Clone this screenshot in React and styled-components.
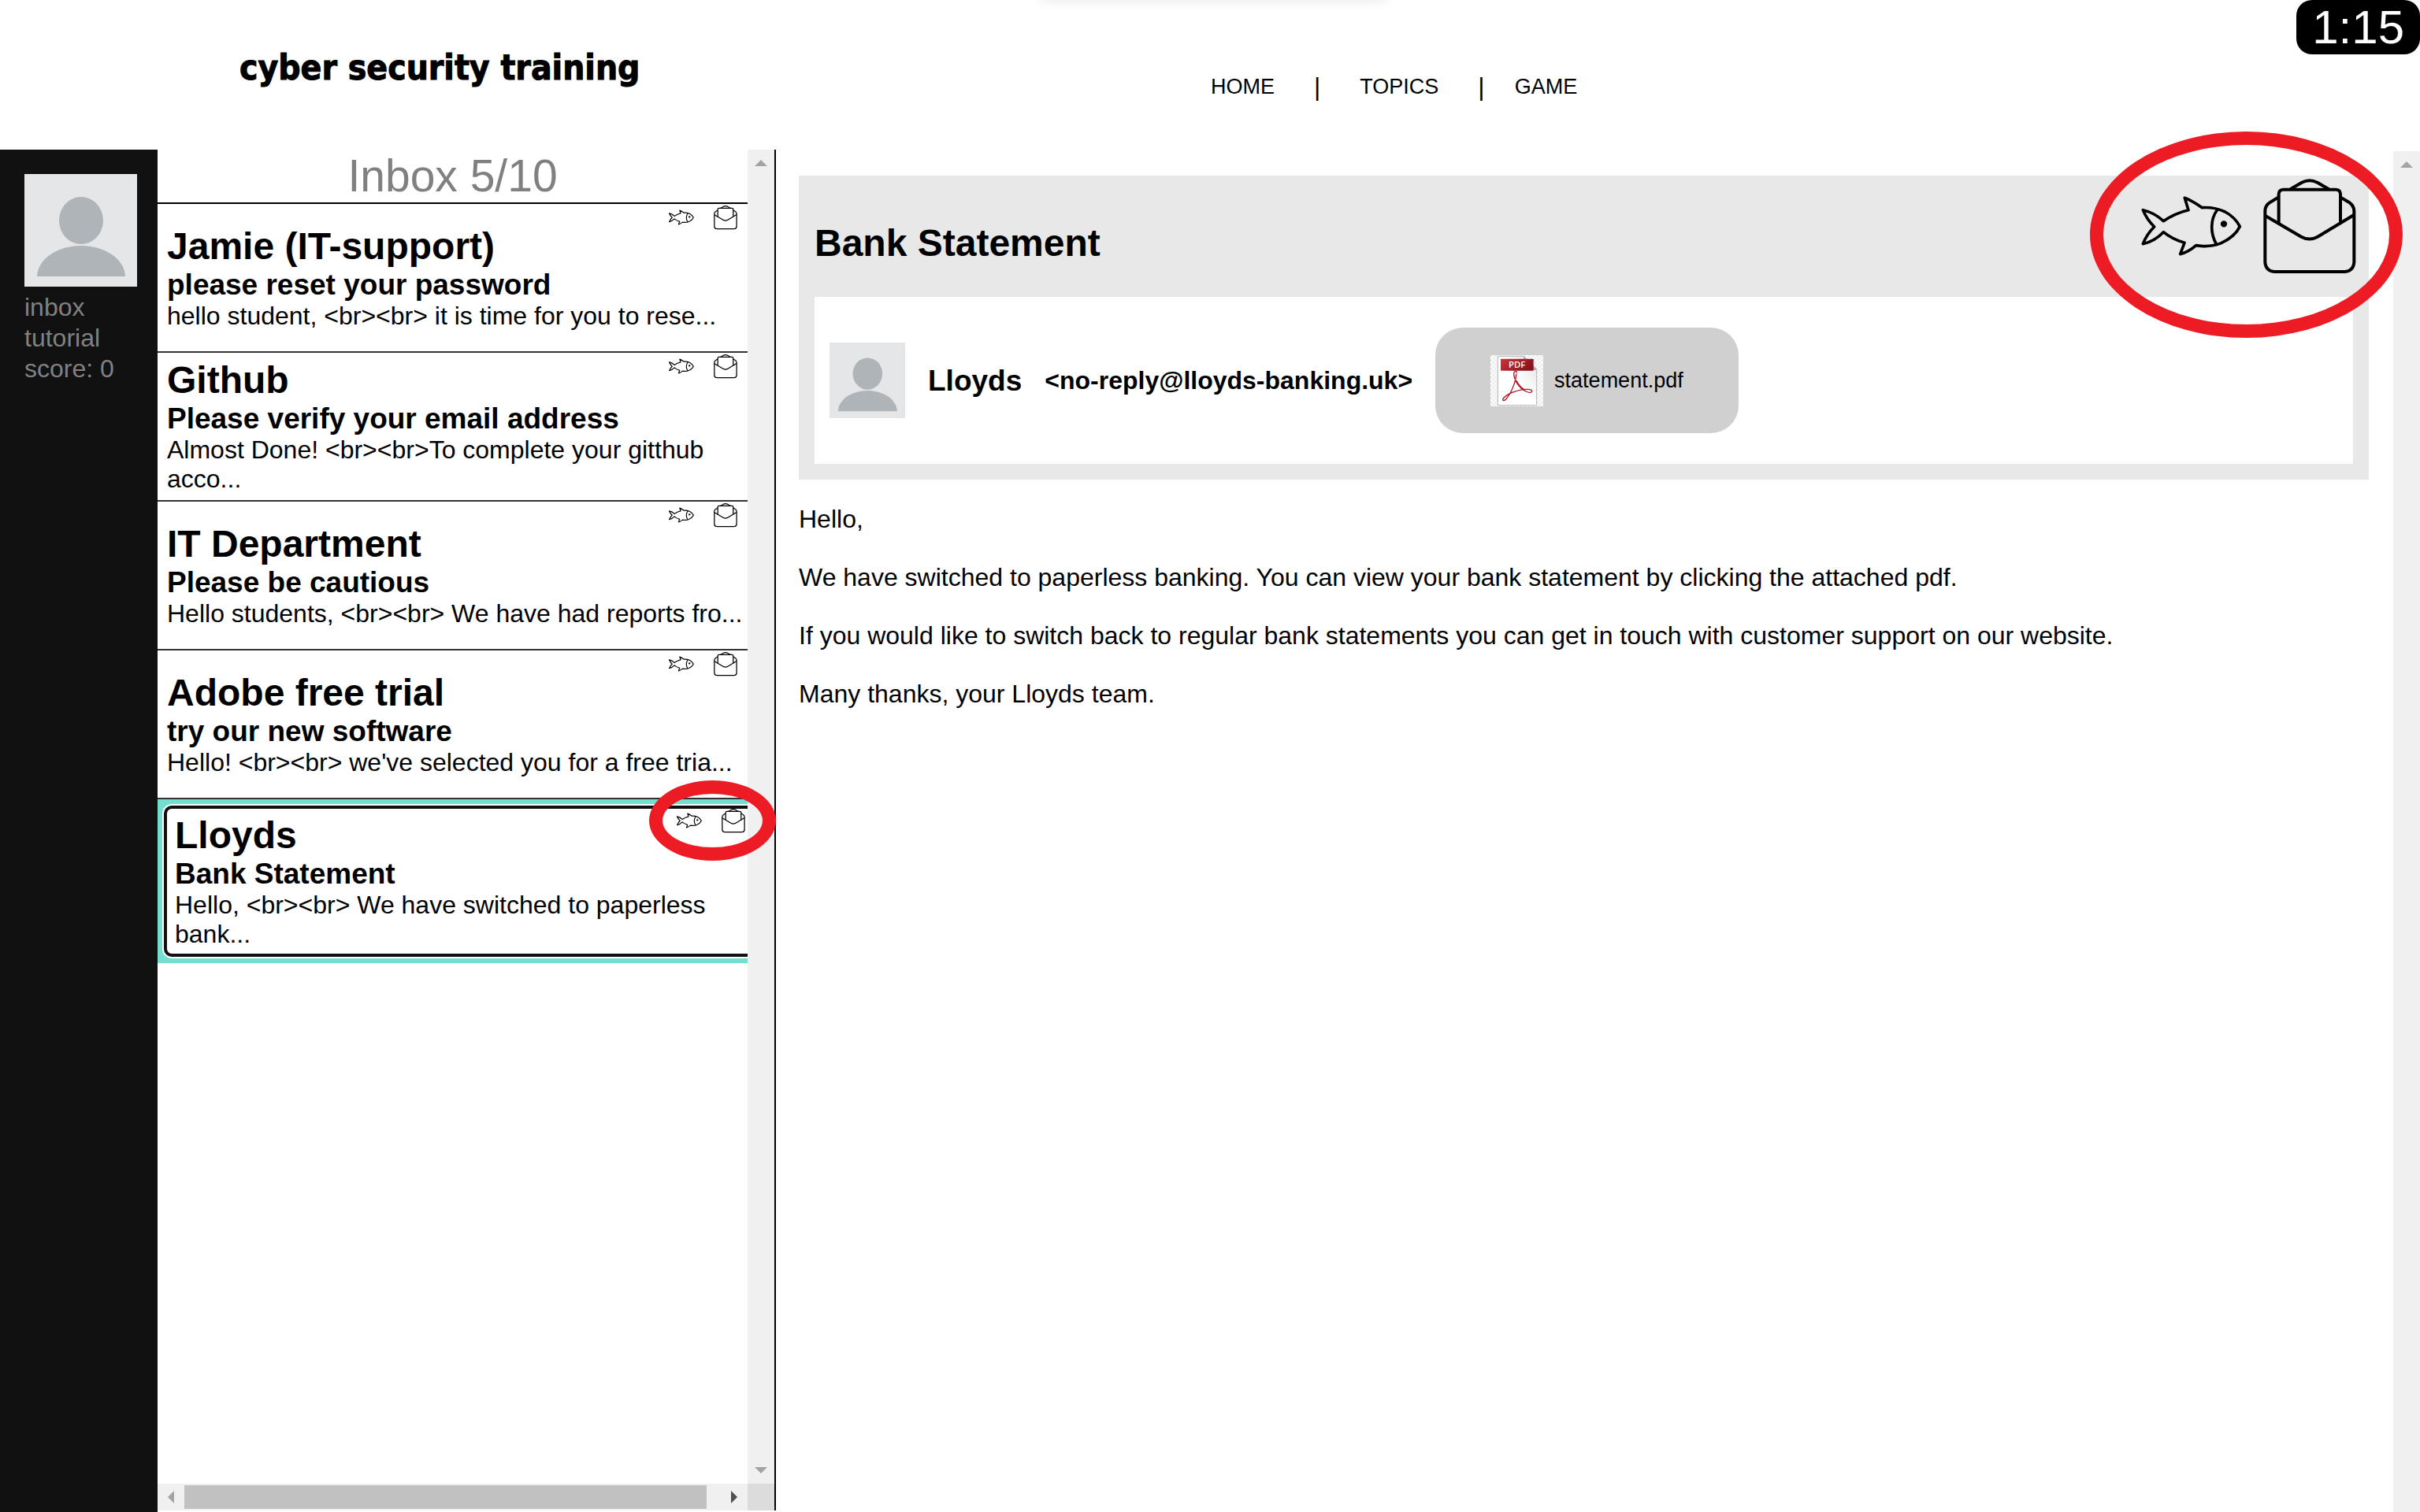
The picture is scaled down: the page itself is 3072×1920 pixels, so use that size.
import React from "react";
import styled, { createGlobalStyle, css } from "styled-components";

const GlobalStyle = createGlobalStyle`
  *, *::before, *::after { box-sizing: border-box; }
  body {
    margin: 0;
    background: #fff;
    color: #000;
    font-family: "Liberation Sans", Arial, sans-serif;
    font-size: 32px;
    line-height: 37px;
  }
  h1, h2, h3, p, ul { margin: 0; padding: 0; }
  button { font: inherit; color: inherit; border: 0; background: none; padding: 0; cursor: pointer; }
`;

const Page = styled.div`
  position: relative;
  display: flex;
  flex-direction: column;
  min-height: 100vh;
  overflow: hidden;
`;

const PopupShadow = styled.div`
  position: absolute;
  top: -40px;
  left: 43%;
  width: 440px;
  height: 40px;
  box-shadow: 0 0 16px rgba(0, 0, 0, 0.1);
`;

const Timer = styled.time`
  position: absolute;
  top: 0;
  right: 0;
  padding: 0 20px;
  border-radius: 20px;
  background: #000;
  color: #fff;
  font-size: 60px;
  line-height: 69px;
`;

const TopBar = styled.header`
  display: grid;
  grid-template-columns: 1fr 1fr;
  height: 190px;
`;

const Brand = styled.a`
  margin: 54px 0 0 304px;
  justify-self: start;
  align-self: start;
  color: #000;
  text-decoration: none;
  white-space: nowrap;
  font-family: "DejaVu Sans Condensed", "DejaVu Sans", sans-serif;
  font-weight: 700;
  font-size: 44px;
  line-height: 64px;
  -webkit-text-stroke: 1px #000;
`;

const Nav = styled.nav`
  display: flex;
  align-self: start;
  margin: 94px 0 0 1px;
  line-height: 32px;
`;

const NavLink = styled.a`
  color: #000;
  text-decoration: none;
  font-size: 27px;
`;

const NavDivider = styled.span`
  margin: 0 ${(p) => p.$after}px 0 50px;
`;

const Workspace = styled.div`
  flex: 1;
  display: grid;
  grid-template-columns: 200px 785px 1fr;
`;

const Sidebar = styled.aside`
  display: flex;
  flex-direction: column;
  align-items: flex-start;
  padding: 31px 26px 31px 31px;
  background: #111;
  color: #818181;
  line-height: 39px;

  svg { margin-bottom: 7px; }
`;

const SideLink = styled.a`
  color: inherit;
  text-decoration: none;
`;

const InboxPanel = styled.section`
  position: relative;
  display: grid;
  grid-template-columns: minmax(0, 1fr) 34px;
  grid-template-rows: 1fr 34px;
  margin-bottom: 2px;
  border-right: 2px solid #000;
`;

const InboxView = styled.div`
  overflow: hidden;
`;

const InboxTitle = styled.h2`
  border-bottom: 2px solid #000;
  color: #808080;
  text-align: center;
  font-weight: 400;
  font-size: 57px;
  line-height: 67px;
`;

const MailList = styled.ul`
  list-style: none;
`;

const MailButton = styled.button`
  display: flex;
  flex-direction: column;
  justify-content: center;
  width: 100%;
  height: 187px;
  padding: 0 6px 0 12px;
  text-align: left;
`;

const MiniActions = styled.div`
  position: absolute;
  top: 1px;
  right: 12px;
  display: flex;
  gap: 24px;
`;

const MailItem = styled.li`
  position: relative;
  border-bottom: 2px solid #333;

  ${(p) =>
    p.$open &&
    css`
      margin-right: -20px;
      padding: 8px;
      border-bottom: 0;
      background: #74dfcf;

      ${MailButton} {
        height: 192px;
        padding: 0 10px;
        border: 4px solid #101010;
        border-radius: 10px;
        background: #fff;
        box-shadow: 0 0 0 2px #fff;
      }

      ${MiniActions} {
        top: 11px;
        right: 22px;
      }
    `}
`;

const Sender = styled.strong`
  font-size: 48px;
  line-height: 54px;
`;

const Subject = styled.strong`
  font-size: 37px;
  line-height: 43px;
`;

const IconButton = styled.button`
  display: block;

  svg { display: block; }
`;

const ScrollTrack = styled.div`
  display: flex;
  flex-direction: ${(p) => (p.$vertical ? "column" : "row")};
  justify-content: ${(p) => (p.$vertical ? "space-between" : "flex-start")};
  background: #f0f0f0;
`;

const ScrollButton = styled.button`
  display: grid;
  place-items: center;
  width: 34px;
  height: 34px;
`;

const ScrollLane = styled.div`
  flex: 1;
  padding: 2px 18px 2px 0;
`;

const ScrollThumb = styled.div`
  height: 30px;
  background: #c1c1c1;
`;

const ScrollCorner = styled.div`
  background: #dcdcdc;
`;

const Ring = styled.div`
  position: absolute;
  border: 17px solid #ed1c24;
  border-radius: 50%;
  pointer-events: none;
`;

const SmallRing = styled(Ring)`
  top: 801px;
  right: -2px;
  width: 161px;
  height: 102px;
`;

const LargeRing = styled(Ring)`
  top: -56px;
  right: -43px;
  width: 397px;
  height: 262px;
`;

const Reader = styled.main`
  display: grid;
  grid-template-columns: minmax(0, 1fr) 34px;
`;

const ReaderScroll = styled(ScrollTrack)`
  margin-top: 2px;
`;

const Message = styled.article`
  padding: 33px 31px 0 29px;
`;

const MessageHead = styled.header`
  position: relative;
  padding-bottom: 20px;
  background: #e8e8e8;
`;

const TitleRow = styled.div`
  display: flex;
  justify-content: space-between;
  align-items: flex-start;
  padding: 0 11px 0 20px;
`;

const MessageTitle = styled.h1`
  margin: 59px 0 41px;
  font-size: 48px;
  line-height: 54px;
`;

const Actions = styled.div`
  display: flex;
  gap: 22px;
`;

const SenderCard = styled.div`
  display: flex;
  align-items: center;
  gap: 29px;
  margin: 0 20px;
  padding: 39px 19px;
  background: #fff;
`;

const SenderName = styled.h2`
  font-size: 37px;
  line-height: 43px;
`;

const SenderAddress = styled.strong`
  white-space: nowrap;
`;

const Attachment = styled.button`
  display: flex;
  align-items: center;
  gap: 14px;
  height: 134px;
  padding: 0 70px;
  border-radius: 35px;
  background: #d0d0d0;
  font-size: 27px;
  line-height: 32px;
`;

const MessageBody = styled.div`
  display: flex;
  flex-direction: column;
  gap: 37px;
  margin-top: 32px;
`;

function Avatar({ size }) {
  return (
    <svg width={size} height={size} viewBox="0 0 143 143" role="img" aria-label="avatar">
      <rect width="143" height="143" fill="#e4e6e8" />
      <ellipse cx="72" cy="59" rx="28" ry="30" fill="#aeb4b7" />
      <path d="M16 130 C17 107 43 91 72 91 C101 91 127 107 128 130 Z" fill="#aeb4b7" />
    </svg>
  );
}

function FishIcon({ size, weight = 11 }) {
  return (
    <svg
      width={size}
      height={size}
      viewBox="238 220 384 384"
      fill="none"
      stroke="#000"
      strokeWidth={weight}
      strokeLinejoin="round"
      strokeLinecap="round"
    >
      <path d="M245 351 C275 358 303 374 323 393 C350 375 384 359 418 351 L404 305 C428 314 450 328 470 342 C500 340 530 345 558 358 C580 370 601 388 614 414 C601 441 573 463 543 477 C513 490 478 491 447 486 C429 502 408 514 387 519 L403 476 C373 467 347 455 323 435 C303 456 276 473 245 480 C254 456 269 434 288 415 C269 396 254 374 245 351 Z" />
      <path d="M529 349 C500 387 501 440 525 482" />
      <circle cx="553" cy="404" r="7" fill="#000" />
    </svg>
  );
}

function EnvelopeIcon({ size, weight = 12 }) {
  return (
    <svg
      width={size}
      height={size}
      viewBox="686 220 384 384"
      fill="none"
      stroke="#000"
      strokeWidth={weight}
      strokeLinejoin="round"
    >
      <path d="M758 303 L728 321 Q708 334 708 354 V551 Q711 583 743 586 H1012 Q1044 583 1047 551 V354 Q1046 334 1027 321 L996 303" />
      <path d="M760 404 V290 Q761 274 777 273 H978 Q994 274 995 290 V404" />
      <path d="M804 272 L848 246 Q877 231 907 246 L951 272" />
      <path d="M709 373 L846 453 Q877 470 908 453 L1046 370" />
    </svg>
  );
}

function PdfIcon() {
  return (
    <svg width="67" height="65" viewBox="0 0 201 195" aria-hidden="true">
      <defs>
        <pattern id="checks" width="16" height="16" patternUnits="userSpaceOnUse">
          <rect width="16" height="16" fill="#fdfdfd" />
          <rect width="8" height="8" fill="#ececec" />
          <rect x="8" y="8" width="8" height="8" fill="#ececec" />
        </pattern>
        <linearGradient id="banner" x1="0" y1="0" x2="1" y2="0.4">
          <stop offset="0" stopColor="#cf3339" />
          <stop offset="1" stopColor="#8c121d" />
        </linearGradient>
        <linearGradient id="sheet" x1="0" y1="1" x2="1" y2="0">
          <stop offset="0.5" stopColor="#fff" />
          <stop offset="1" stopColor="#e2e2e2" />
        </linearGradient>
      </defs>
      <rect width="201" height="195" fill="url(#checks)" />
      <path d="M28 4 H126 L176 54 V191 H28 Z" fill="url(#sheet)" stroke="#b5b5b5" strokeWidth="3" />
      <path d="M126 4 L136 14 H126 Z" fill="#a8a8a8" />
      <path d="M163 42 L176 56 H163 Z" fill="#999" />
      <rect x="39" y="14" width="125" height="45" rx="2" fill="url(#banner)" />
      <text
        x="101"
        y="48"
        fill="#fff"
        textAnchor="middle"
        fontFamily="Open Sans, sans-serif"
        fontWeight="600"
        fontSize="34"
      >
        PDF
      </text>
      <g fill="none" stroke="#b01524" strokeLinecap="round">
        <path d="M101 66 C97 58 88 61 89 73 C91 94 102 111 117 126 C130 138 149 145 156 141 C162 136 155 129 139 130 C115 131 88 138 69 149 C53 158 44 167 48 172 C53 177 65 162 74 147 C86 126 95 99 99 72" strokeWidth="4" />
        <path d="M99 98 C106 112 116 124 128 131" strokeWidth="5" />
      </g>
    </svg>
  );
}

const ARROWS = {
  up: [16, 8, "0,8 8,0 16,8"],
  down: [16, 8, "0,0 16,0 8,8"],
  left: [8, 16, "8,0 8,16 0,8"],
  right: [8, 16, "0,0 8,8 0,16"],
};

function ScrollArrow({ to, active }) {
  const [w, h, points] = ARROWS[to];
  return (
    <ScrollButton type="button" aria-label={`Scroll ${to}`}>
      <svg width={w} height={h}>
        <polygon points={points} fill={active ? "#505050" : "#a3a3a3"} />
      </svg>
    </ScrollButton>
  );
}

const MAILS = [
  {
    sender: "Jamie (IT-support)",
    subject: "please reset your password",
    snippet: "hello student, <br><br> it is time for you to rese...",
  },
  {
    sender: "Github",
    subject: "Please verify your email address",
    snippet: "Almost Done! <br><br>To complete your gitthub acco...",
  },
  {
    sender: "IT Department",
    subject: "Please be cautious",
    snippet: "Hello students, <br><br> We have had reports fro...",
  },
  {
    sender: "Adobe free trial",
    subject: "try our new software",
    snippet: "Hello! <br><br> we've selected you for a free tria...",
  },
  {
    sender: "Lloyds",
    subject: "Bank Statement",
    snippet: "Hello, <br><br> We have switched to paperless bank...",
    open: true,
  },
];

function Mail({ mail }) {
  return (
    <MailItem $open={mail.open}>
      <MailButton type="button">
        <Sender>{mail.sender}</Sender>
        <Subject>{mail.subject}</Subject>
        <span>{mail.snippet}</span>
      </MailButton>
      <MiniActions>
        <IconButton type="button" aria-label="Mark as phishing">
          <FishIcon size={32} weight={14} />
        </IconButton>
        <IconButton type="button" aria-label="Mark as safe">
          <EnvelopeIcon size={32} weight={15} />
        </IconButton>
      </MiniActions>
    </MailItem>
  );
}

export default function App() {
  return (
    <>
      <GlobalStyle />
      <Page>
        <PopupShadow />
        <TopBar>
          <Brand href="#home">cyber security training</Brand>
          <Nav>
            <NavLink href="#home">HOME</NavLink>
            <NavDivider $after={50}>|</NavDivider>
            <NavLink href="#topics">TOPICS</NavLink>
            <NavDivider $after={38}>|</NavDivider>
            <NavLink href="#game">GAME</NavLink>
          </Nav>
        </TopBar>
        <Workspace>
          <Sidebar>
            <Avatar size={143} />
            <SideLink href="#inbox">inbox</SideLink>
            <SideLink href="#tutorial">tutorial</SideLink>
            <span>score: 0</span>
          </Sidebar>
          <InboxPanel>
            <InboxView>
              <InboxTitle>Inbox 5/10</InboxTitle>
              <MailList>
                {MAILS.map((mail) => (
                  <Mail key={mail.sender} mail={mail} />
                ))}
              </MailList>
            </InboxView>
            <ScrollTrack $vertical>
              <ScrollArrow to="up" />
              <ScrollArrow to="down" />
            </ScrollTrack>
            <ScrollTrack>
              <ScrollArrow to="left" />
              <ScrollLane>
                <ScrollThumb />
              </ScrollLane>
              <ScrollArrow to="right" active />
            </ScrollTrack>
            <ScrollCorner />
            <SmallRing />
          </InboxPanel>
          <Reader>
            <Message>
              <MessageHead>
                <TitleRow>
                  <MessageTitle>Bank Statement</MessageTitle>
                  <Actions>
                    <IconButton type="button" aria-label="Mark as phishing">
                      <FishIcon size={128} />
                    </IconButton>
                    <IconButton type="button" aria-label="Mark as safe">
                      <EnvelopeIcon size={128} />
                    </IconButton>
                  </Actions>
                </TitleRow>
                <SenderCard>
                  <Avatar size={96} />
                  <SenderName>Lloyds</SenderName>
                  <SenderAddress>&lt;no-reply@lloyds-banking.uk&gt;</SenderAddress>
                  <Attachment type="button">
                    <PdfIcon />
                    statement.pdf
                  </Attachment>
                </SenderCard>
                <LargeRing />
              </MessageHead>
              <MessageBody>
                <p>Hello,</p>
                <p>
                  We have switched to paperless banking. You can view your bank statement by clicking
                  the attached pdf.
                </p>
                <p>
                  If you would like to switch back to regular bank statements you can get in touch
                  with customer support on our website.
                </p>
                <p>Many thanks, your Lloyds team.</p>
              </MessageBody>
            </Message>
            <ReaderScroll $vertical>
              <ScrollArrow to="up" />
            </ReaderScroll>
          </Reader>
        </Workspace>
        <Timer>1:15</Timer>
      </Page>
    </>
  );
}
